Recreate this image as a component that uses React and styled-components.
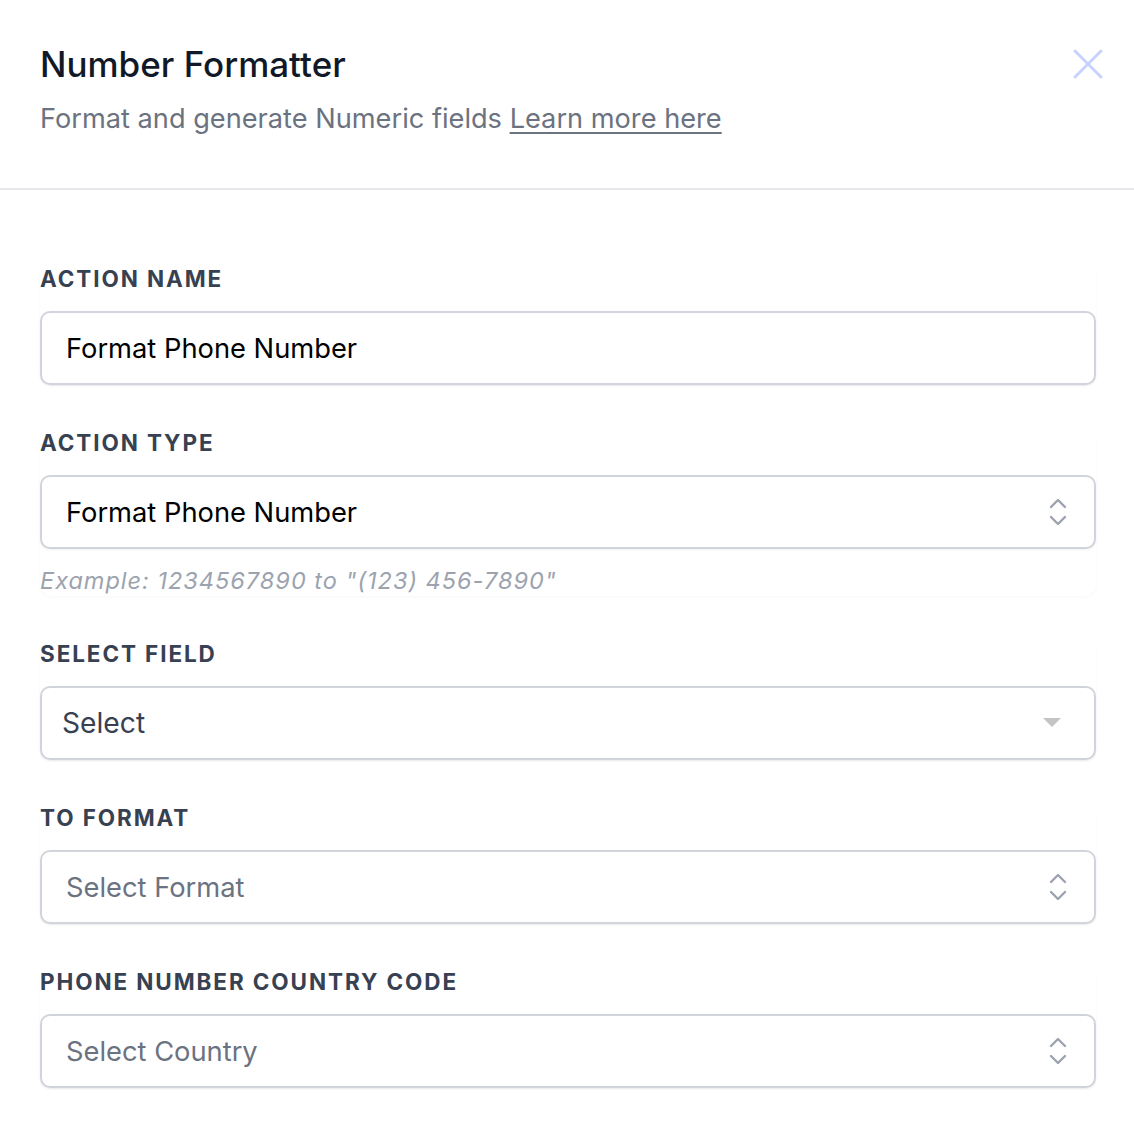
import styled, { createGlobalStyle } from "styled-components";

const GlobalStyle = createGlobalStyle`
  html, body {
    margin: 0;
    padding: 0;
    background: #ffffff;
    font-family: "Inter", "Noto Sans", sans-serif;
  }
`;

const Panel = styled.div`
  width: 1134px;
  min-height: 1124px;
  background: #ffffff;
`;

const Header = styled.header`
  position: relative;
  padding: 42px 40px 50px 40px;
  border-bottom: 2px solid #e5e7eb;
`;

const Title = styled.h1`
  margin: 0;
  font-size: 35px;
  line-height: 44px;
  font-weight: 500;
  color: #111827;
`;

const Subtitle = styled.p`
  margin: 14px 0 0 0;
  font-size: 27.2px;
  line-height: 38px;
  color: #6b7280;

  a {
    color: #6b7280;
    text-decoration: underline;
    text-underline-offset: 4px;
  }
`;

const CloseButton = styled.button`
  position: absolute;
  top: 46px;
  right: 28px;
  width: 36px;
  height: 36px;
  padding: 0;
  border: none;
  background: none;
  color: #c7d2fe;
  cursor: pointer;
`;

const Body = styled.div`
  display: flex;
  flex-direction: column;
  gap: 44px;
  padding: 75px 38px 40px 40px;
`;

const Group = styled.div`
  border-radius: 12px;
  box-shadow: 0 1px 3px rgba(0, 0, 0, 0.035);
`;

const Label = styled.label`
  display: block;
  font-size: 22.5px;
  line-height: 28px;
  font-weight: 700;
  letter-spacing: 1.9px;
  color: #374151;
  text-transform: uppercase;
  margin-bottom: 18px;
`;

const Field = styled.div`
  position: relative;
  box-sizing: border-box;
  height: 74px;
  display: flex;
  align-items: center;
  padding: 0 ${(p) => (p.$tight ? "20px" : "24px")};
  border: 2px solid #d1d5db;
  border-radius: 10px;
  box-shadow: 0 1px 2px rgba(0, 0, 0, 0.06);
  background: #fff;
  font-size: ${(p) => (p.$tight ? "28.2px" : "27.3px")};
  color: ${(p) => (p.$placeholder ? "#6b7280" : p.$tight ? "#374151" : "#000000")};
`;

const Value = styled.span`
  flex: 1;
`;

const Hint = styled.p`
  margin: 17px 0 0 0;
  font-size: 23.5px;
  line-height: 30px;
  font-style: italic;
  letter-spacing: 1px;
  color: #9ca3af;
`;

function UpDownIcon() {
  return (
    <svg width="20" height="32" viewBox="0 0 20 32" fill="none" style={{ marginRight: "2px" }}>
      <path
        d="M3 11 L10 4 L17 11"
        stroke="#9ca3af"
        strokeWidth="2.4"
        strokeLinecap="round"
        strokeLinejoin="round"
      />
      <path
        d="M3 21 L10 28 L17 21"
        stroke="#9ca3af"
        strokeWidth="2.4"
        strokeLinecap="round"
        strokeLinejoin="round"
      />
    </svg>
  );
}

function CaretIcon() {
  return (
    <svg width="20" height="12" viewBox="0 0 20 12" style={{ marginRight: "12px" }}>
      <path d="M1 1 L19 1 L10 10 Z" fill="#c4c4c4" />
    </svg>
  );
}

function SelectBox({ value, placeholder, caret }) {
  return (
    <Field $placeholder={placeholder} $tight={caret}>
      <Value>{value}</Value>
      {caret ? <CaretIcon /> : <UpDownIcon />}
    </Field>
  );
}

export default function App() {
  return (
    <>
      <GlobalStyle />
      <Panel>
        <Header>
          <Title>Number Formatter</Title>
          <Subtitle>
            Format and generate Numeric fields <a href="#">Learn more here</a>
          </Subtitle>
          <CloseButton aria-label="Close">
            <svg width="36" height="36" viewBox="0 0 36 36" fill="none">
              <path
                d="M5 5 L31 31 M31 5 L5 31"
                stroke="currentColor"
                strokeWidth="3"
                strokeLinecap="round"
              />
            </svg>
          </CloseButton>
        </Header>
        <Body>
          <Group>
            <Label>Action Name</Label>
            <Field>
              <Value>Format Phone Number</Value>
            </Field>
          </Group>
          <Group>
            <Label>Action Type</Label>
            <SelectBox value="Format Phone Number" />
            <Hint>Example: 1234567890 to "(123) 456-7890"</Hint>
          </Group>
          <Group>
            <Label>Select Field</Label>
            <SelectBox value="Select" caret />
          </Group>
          <Group>
            <Label>To Format</Label>
            <SelectBox value="Select Format" placeholder />
          </Group>
          <Group>
            <Label>Phone Number Country Code</Label>
            <SelectBox value="Select Country" placeholder />
          </Group>
        </Body>
      </Panel>
    </>
  );
}
